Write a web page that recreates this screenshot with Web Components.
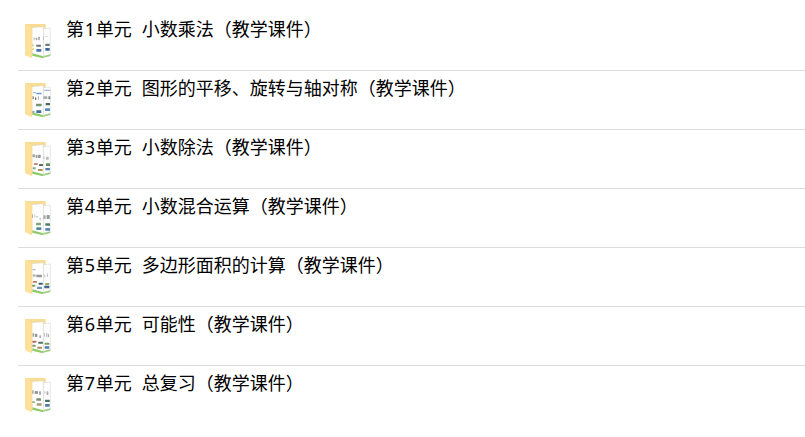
<!DOCTYPE html>
<html lang="zh-CN">
<head>
<meta charset="utf-8">
<title>教学课件</title>
<style>
  body {
    margin: 0;
    background: #fff;
    color: #000;
    font-family: "Noto Sans", "Noto Sans CJK SC", sans-serif;
    overflow: hidden;
  }
</style>
</head>
<body>
<file-list>
  <file-row unit="1">小数乘法（教学课件）</file-row>
  <file-row unit="2">图形的平移、旋转与轴对称（教学课件）</file-row>
  <file-row unit="3">小数除法（教学课件）</file-row>
  <file-row unit="4">小数混合运算（教学课件）</file-row>
  <file-row unit="5">多边形面积的计算（教学课件）</file-row>
  <file-row unit="6">可能性（教学课件）</file-row>
  <file-row unit="7">总复习（教学课件）</file-row>
</file-list>

<script>
// preview marks on the two sheets: x, y, width, height, colour
const marks = {
  1: [[59, 82, 3, 9, '#b8b8b8'], [65, 83, 5, 8, '#aaa'], [73, 80, 4, 11, '#999'], [88, 79, 2, 10, '#aaa'], [93, 79, 8, 2, '#ccc'], [54, 103, 5, 6, '#c8d488'], [67, 104, 14, 6, '#66756a'], [94, 101, 13, 7, '#6c8275'], [55, 115, 5, 5, '#ead06c'], [67, 117, 15, 8, '#4676ab'], [94, 114, 13, 8, '#3c6898']],
  2: [[57, 66, 9, 4, '#9bb8dc'], [67, 68, 16, 5, '#769ccc'], [90, 59, 19, 4, '#9bbce0'], [55, 79, 5, 8, '#999'], [63, 82, 4, 8, '#777'], [72, 79, 3, 10, '#aaa'], [88, 79, 12, 8, '#aaa'], [103, 79, 6, 9, '#888'], [66, 101, 17, 8, '#71966f'], [95, 99, 13, 7, '#426b59'], [54, 123, 8, 5, '#86aacd'], [67, 121, 15, 8, '#426e98'], [93, 115, 15, 8, '#568cc8']],
  3: [[55, 73, 8, 9, '#aaa'], [65, 74, 4, 10, '#999'], [71, 74, 9, 10, '#999'], [87, 79, 5, 8, '#ccc'], [96, 80, 8, 9, '#bbb'], [60, 99, 11, 6, '#c28a72'], [75, 102, 12, 6, '#526e64'], [96, 100, 12, 8, '#648f58'], [56, 112, 9, 6, '#7fa797'], [72, 117, 14, 6, '#b89353'], [94, 114, 14, 7, '#5b83aa']],
  4: [[53, 73, 4, 11, '#aaa'], [61, 73, 3, 10, '#ccc'], [66, 79, 7, 3, '#bbb'], [77, 83, 3, 8, '#bbb'], [88, 76, 7, 11, '#aaa'], [98, 75, 9, 12, '#999'], [66, 98, 15, 8, '#83a775'], [94, 100, 14, 7, '#4b8066'], [67, 112, 15, 8, '#5587a1'], [94, 114, 14, 8, '#5784b7']],
  5: [[55, 57, 10, 4, '#a4bddb'], [56, 73, 9, 7, '#bbb'], [67, 74, 17, 8, '#999'], [90, 73, 4, 9, '#ccc'], [99, 70, 2, 11, '#aaa'], [57, 93, 12, 5, '#bc765f'], [74, 98, 12, 6, '#3e6470'], [93, 99, 13, 7, '#9da96e'], [54, 104, 10, 6, '#769d6a'], [69, 110, 15, 7, '#6f93bd'], [91, 107, 15, 8, '#40678d']],
  6: [[55, 76, 6, 10, '#aaa'], [63, 77, 7, 10, '#999'], [76, 82, 5, 8, '#aaa'], [91, 75, 2, 11, '#aaa'], [97, 75, 3, 13, '#aaa'], [102, 77, 3, 11, '#aaa'], [55, 98, 12, 6, '#b76c69'], [73, 101, 14, 6, '#50716a'], [92, 104, 14, 6, '#789b60'], [55, 110, 10, 6, '#829b7d'], [70, 116, 14, 6, '#aa8b52'], [92, 115, 14, 7, '#4e79ad']],
  7: [[54, 73, 5, 10, '#aaa'], [62, 75, 10, 9, '#999'], [75, 76, 6, 10, '#aaa'], [91, 75, 3, 9, '#ccc'], [98, 76, 5, 11, '#aaa'], [67, 97, 14, 7, '#768e69'], [93, 101, 14, 7, '#487266'], [54, 106, 9, 5, '#9db58a'], [68, 112, 15, 7, '#a99c72'], [93, 114, 14, 8, '#597fa4']],
};

// vertical shift of the marks on each preview
const shift = { 1: 0, 2: 3, 3: 6, 4: 9, 5: 12, 6: 9, 7: 6 };

class FolderIcon extends HTMLElement {
  connectedCallback() {
    const preview = this.getAttribute('preview');
    const rects = marks[preview]
      .map(([x, y, w, h, fill]) => `<rect x="${x}" y="${y}" width="${w}" height="${h}" rx="1.5" fill="${fill}"/>`)
      .join('');

    this.attachShadow({ mode: 'open' }).innerHTML = `
      <style>
        :host { display: block; width: 30px; height: 40px; }
        svg { display: block; }
        .marks { filter: blur(.8px); }
      </style>
      <svg width="30" height="40" viewBox="27 33 90 120">
        <path d="M34 42H92Q95 42 95 46V60L88 136H37Z" fill="#f8dc93"/>
        <path d="M88 56 109 54V137L88 142Z" fill="#fdfdfd" stroke="#d2d2d2" stroke-width="1.5"/>
        <path d="M88 138 109 133V138L88 143Z" fill="#9fd07e"/>
        <path d="M52 53 88 50V143L54 135Z" fill="#fefefe" stroke="#d6d6d6" stroke-width="1.5"/>
        <path d="M55 130 88 139V145L55 137Z" fill="#8ccb67"/>
        <g class="marks" transform="translate(0 ${shift[preview]})">${rects}</g>
        <path d="M33 42 50 48Q54 50 54 55V142Q54 145 51 143L36 137Q33 136 33 133Z" fill="#fde09a"/>
        <path d="M50 48Q54 50 54 55V142" fill="none" stroke="#efcf80" stroke-width="1.5"/>
      </svg>
    `;
  }
}

class FileRow extends HTMLElement {
  connectedCallback() {
    const unit = this.getAttribute('unit');
    this.attachShadow({ mode: 'open' }).innerHTML = `
      <style>
        :host {
          display: flex;
          box-sizing: border-box;
          height: 59px;
          border-bottom: 1px solid #dcdcdc;
        }
        :host(:last-child) { border-bottom: 0; }
        folder-icon { margin: 9px 13px 0 5px; }
        .name {
          display: flex;
          gap: 10px;
          margin-top: 3px;
          font-size: 18px;
          line-height: 28px;
          white-space: nowrap;
        }
        .digit { margin: 0 .75px; }
      </style>
      <folder-icon preview="${unit}"></folder-icon>
      <div class="name"><span>第<span class="digit">${unit}</span>单元</span><span><slot></slot></span></div>
    `;
  }
}

class FileList extends HTMLElement {
  constructor() {
    super();
    this.attachShadow({ mode: 'open' }).innerHTML = `
      <style>
        :host { display: block; padding: 12px 0 0 18px; }
      </style>
      <slot></slot>
    `;
  }
}

customElements.define('folder-icon', FolderIcon);
customElements.define('file-row', FileRow);
customElements.define('file-list', FileList);
</script>
</body>
</html>
